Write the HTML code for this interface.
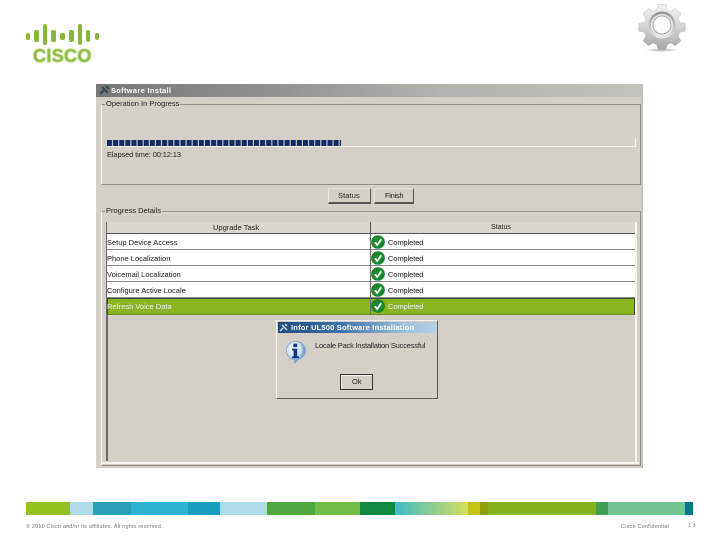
<!DOCTYPE html>
<html>
<head>
<meta charset="utf-8">
<style>
html,body{margin:0;padding:0;background:#fff}
#p{position:relative;width:720px;height:540px;overflow:hidden;background:#fff;font-family:"Liberation Sans",sans-serif}
#p div{position:absolute;box-sizing:border-box}
.t{font-size:7.5px;line-height:10px;color:#222;white-space:nowrap;filter:blur(.35px)}
.w{color:#eef}
.bar{background:#86b83c;border-radius:2px;width:4.5px;filter:blur(.3px)}
.btn{background:#d4d0c8;border-top:1px solid #e8e6e0;border-left:1px solid #e8e6e0;border-right:1px solid #555;border-bottom:2px solid #555}
.row{left:107px;width:528px;height:16px;background:#fff;border-bottom:1px solid #8a8a86}
.f{height:13px;top:502px}
</style>
</head>
<body>
<div id="p">
<!-- logo -->
<div class="bar" style="left:25.500px;top:33px;height:7px"></div>
<div class="bar" style="left:34px;top:30px;height:12px"></div>
<div class="bar" style="left:42.500px;top:24px;height:21px"></div>
<div class="bar" style="left:51px;top:30px;height:12px"></div>
<div class="bar" style="left:60px;top:33px;height:7px"></div>
<div class="bar" style="left:69px;top:30px;height:12px"></div>
<div class="bar" style="left:77.500px;top:24px;height:21px"></div>
<div class="bar" style="left:85.500px;top:30px;height:12px"></div>
<div class="bar" style="left:94.500px;top:33px;height:7px"></div>
<div style="left:33px;top:47px;font-size:18px;line-height:19px;font-weight:bold;color:#8abb3a;letter-spacing:.35px;-webkit-text-stroke:.6px #8abb3a;filter:blur(.4px);white-space:nowrap">CISCO</div>

<!-- gear -->
<svg style="position:absolute;left:632px;top:0" width="60" height="54" viewBox="0 0 60 54">
<defs>
<linearGradient id="g" x1="0" y1="0" x2="0" y2="1"><stop offset="0" stop-color="#f2f2f2"/><stop offset=".5" stop-color="#d4d4d4"/><stop offset="1" stop-color="#a4a4a4"/></linearGradient>
<linearGradient id="r" x1="0" y1="0" x2="0" y2="1"><stop offset="0" stop-color="#949494"/><stop offset="1" stop-color="#ececec"/></linearGradient>
<radialGradient id="s"><stop offset="0" stop-color="#aaa"/><stop offset="1" stop-color="#fff"/></radialGradient>
</defs>
<ellipse cx="30" cy="50" rx="17" ry="2" fill="url(#s)"/>
<g transform="translate(30 25) scale(.9) translate(-29.500 -25)">
<path fill="url(#g)" stroke="#c4c4c4" stroke-width=".5" d="M25 2h9l1.500 6 4 1.700 5.300-3.200 6 6-3.200 5.300 1.700 4 6.200 1.500v8.500l-6.200 1.500-1.700 4 3.200 5.300-6.500 5.500-4.800-3-4 1.700-1.500 5.700h-9l-1.500-5.700-4-1.700-4.800 3-6.500-5.500 3.200-5.300-1.700-4-6.200-1.500v-8.500l6.200-1.500 1.700-4-3.200-5.300 6-6 5.300 3.200 4-1.700z"/>
</g>
<circle cx="30" cy="25" r="13.500" fill="url(#r)"/>
<circle cx="30" cy="25" r="11" fill="#e8e8e8"/>
<circle cx="30" cy="25" r="9" fill="#fff" stroke="#a8a8a8" stroke-width="1"/>
</svg>

<!-- window -->
<div style="left:96px;top:84px;width:547px;height:384px;background:#d4d0c8"></div>
<div style="left:96px;top:84px;width:547px;height:13px;background:linear-gradient(90deg,#777 0,#8f8f8f 30%,#b4b4b0 65%,#c2c2bc 100%)"></div>
<div style="left:641px;top:97px;width:2px;height:371px;background:#c4c4bc"></div>
<svg style="position:absolute;left:99px;top:85px" width="12" height="11" viewBox="0 0 12 11"><path d="M1 9L5 5M3 2L9 8M7 1L10 4" stroke="#2c4a50" stroke-width="2" fill="none"/></svg>
<div class="t" style="left:111px;top:85.500px;color:#fff;font-weight:bold;font-size:7.500px;letter-spacing:.3px">Software Install</div>

<!-- group 1 -->
<div style="left:101px;top:104px;width:540px;height:81px;border:1px solid #8f8b84;border-left:1px solid #f6f5f1"></div>
<div class="t" style="left:105px;top:99px;background:#d4d0c8;padding:0 1px">Operation In Progress</div>
<svg style="position:absolute;left:107px;top:140px" width="234" height="6">
<defs><pattern id="b" width="6.125" height="6" patternUnits="userSpaceOnUse"><rect width="5" height="6" fill="#152a63"/></pattern></defs>
<rect width="234" height="6" fill="url(#b)"/>
</svg>
<div style="left:107px;top:146px;width:529px;height:1px;background:#f6f5f1"></div>
<div style="left:635px;top:138px;width:1px;height:9px;background:#f6f5f1"></div>
<div class="t" style="left:107px;top:149.500px;letter-spacing:-.13px">Elapsed time: 00:12:13</div>

<div class="btn" style="left:328px;top:188px;width:43px;height:16px"></div>
<div class="t" style="left:338px;top:191px;letter-spacing:.1px">Status</div>
<div class="btn" style="left:374px;top:188px;width:40px;height:16px"></div>
<div class="t" style="left:385px;top:191px;letter-spacing:-.3px">Finish</div>

<!-- group 2 -->
<div style="left:101px;top:211px;width:540px;height:255px;border:1px solid #8f8b84;border-top:1px solid #9a968e;border-left:1px solid #f6f5f1"></div>
<div class="t" style="left:105px;top:206px;background:#d4d0c8;padding:0 1px">Progress Details</div>
<div style="left:102px;top:212px;width:537px;height:252px;border-bottom:2px solid #f6f5f1"></div>
<div style="left:635px;top:222px;width:2px;height:241px;background:#f6f5f1"></div>
<div style="left:106px;top:222px;width:1.500px;height:239px;background:#6a6a66"></div>

<!-- header -->
<div style="left:107px;top:222px;width:528px;height:12px;background:#d9d6ce;border-bottom:1.500px solid #555"></div>
<div style="left:370px;top:222px;width:1px;height:12px;background:#555"></div>
<div class="t" style="left:213px;top:223px">Upgrade Task</div>
<div class="t" style="left:491px;top:223px;font-size:7px">Status</div>

<!-- rows -->
<div class="row" style="top:234px"></div>
<div class="row" style="top:250px"></div>
<div class="row" style="top:266px"></div>
<div class="row" style="top:282px"></div>
<div style="left:107px;top:298px;width:528px;height:17px;background:#8ab51f;border:1px solid #3d4a3a;border-bottom:1px solid #6b8a2a"></div>
<div style="left:370px;top:234px;width:1px;height:81px;background:#6a6a66"></div>

<div class="t" style="left:107px;top:237.500px">Setup Device Access</div>
<div class="t" style="left:107px;top:253.500px">Phone Localization</div>
<div class="t" style="left:107px;top:269.500px">Voicemail Localization</div>
<div class="t" style="left:107px;top:285.500px">Configure Active Locale</div>
<div class="t w" style="left:107px;top:301.500px">Refresh Voice Data</div>

<svg style="position:absolute;left:371px;top:235px" width="14" height="78" viewBox="0 0 14 78">
<defs><g id="c"><circle cx="7" cy="7" r="6.500" fill="#1a8a2e"/><circle cx="7" cy="7" r="6.500" fill="none" stroke="#146c26" stroke-width=".6"/><path d="M3.800 7.200L6.200 10L10.300 4.200" fill="none" stroke="#fff" stroke-width="1.800"/></g></defs>
<use href="#c" y="0"/><use href="#c" y="16"/><use href="#c" y="32"/><use href="#c" y="48"/><use href="#c" y="64"/>
</svg>
<div class="t" style="left:388px;top:237.500px;letter-spacing:-.1px">Completed</div>
<div class="t" style="left:388px;top:253.500px;letter-spacing:-.1px">Completed</div>
<div class="t" style="left:388px;top:269.500px;letter-spacing:-.1px">Completed</div>
<div class="t" style="left:388px;top:285.500px;letter-spacing:-.1px">Completed</div>
<div class="t w" style="left:388px;top:301.500px;letter-spacing:-.1px">Completed</div>

<!-- dialog -->
<div style="left:276px;top:320px;width:162px;height:79px;background:#d4d0c8;border:1px solid #f4f3ef;border-right:1px solid #5a5a56;border-bottom:1.500px solid #5a5a56"></div>
<div style="left:278px;top:322px;width:158px;height:11px;background:linear-gradient(90deg,#1f4a7c 0,#3f73a8 40%,#9cc0dc 80%,#b5d0e4 100%)"></div>
<svg style="position:absolute;left:279px;top:323px" width="10" height="9" viewBox="0 0 10 9"><path d="M1 8L4 5M3 2L8 7M6 1L8 3" stroke="#cfe0ea" stroke-width="1.500" fill="none"/></svg>
<div class="t" style="left:291px;top:322.500px;color:#fff;font-weight:bold;font-size:7.500px;letter-spacing:.2px">Infor UL500 Software Installation</div>
<svg style="position:absolute;left:284px;top:341px" width="23" height="23" viewBox="0 0 24 24">
<defs><radialGradient id="i" cx=".4" cy=".35"><stop offset="0" stop-color="#fff"/><stop offset=".7" stop-color="#cfe2f2"/><stop offset="1" stop-color="#7fa8cf"/></radialGradient></defs>
<path d="M12 .5a10 9.500 0 0 1 3 18.700L11 23.500V19.400A10 9.500 0 0 1 12 .5z" fill="url(#i)" stroke="#7a9cc0" stroke-width=".6"/>
<rect x="9.800" y="2.800" width="4" height="3.600" fill="#12357e"/>
<path d="M8.500 8h5.300v8h1.700v2h-7v-2h1.500v-6H8.500z" fill="#12357e"/>
</svg>
<div class="t" style="left:315px;top:341px;letter-spacing:-.2px">Locale Pack Installation Successful</div>
<div style="left:340px;top:374px;width:33px;height:16px;background:#d4d0c8;border:1px solid #333;border-right:1.500px solid #333;border-bottom:1.500px solid #333;box-shadow:inset 1px 1px 0 #f6f5f1"></div>
<div class="t" style="left:352px;top:377px">Ok</div>

<!-- footer bar -->
<div class="f" style="left:26px;width:44px;background:#94c11f"></div>
<div class="f" style="left:70px;width:23px;background:#aedbe6"></div>
<div class="f" style="left:93px;width:38px;background:#29a0b5"></div>
<div class="f" style="left:131px;width:57px;background:#2bb5d2"></div>
<div class="f" style="left:188px;width:32px;background:#189dc3"></div>
<div class="f" style="left:220px;width:47px;background:#aedbe6"></div>
<div class="f" style="left:267px;width:48px;background:#4ea83e"></div>
<div class="f" style="left:315px;width:45px;background:#72bd45"></div>
<div class="f" style="left:360px;width:35px;background:#0f8a40"></div>
<div class="f" style="left:395px;width:73px;background:linear-gradient(90deg,#3fbbc9,#d6df5c)"></div>
<div class="f" style="left:468px;width:12px;background:#c4c414"></div>
<div class="f" style="left:480px;width:8px;background:#8f9f0a"></div>
<div class="f" style="left:488px;width:108px;background:#84b21a"></div>
<div class="f" style="left:596px;width:12px;background:#409e56"></div>
<div class="f" style="left:608px;width:77px;background:#74c596"></div>
<div class="f" style="left:685px;width:8px;background:#00788a"></div>

<div class="t" style="left:26px;top:521.500px;font-size:5.500px;letter-spacing:.17px;color:#777">© 2010 Cisco and/or its affiliates. All rights reserved.</div>
<div class="t" style="left:621px;top:521.500px;font-size:5.500px;letter-spacing:.2px;color:#777">Cisco Confidential</div>
<div class="t" style="left:688px;top:520.500px;font-size:6px;letter-spacing:1px;color:#777">13</div>
</div>
</body>
</html>
